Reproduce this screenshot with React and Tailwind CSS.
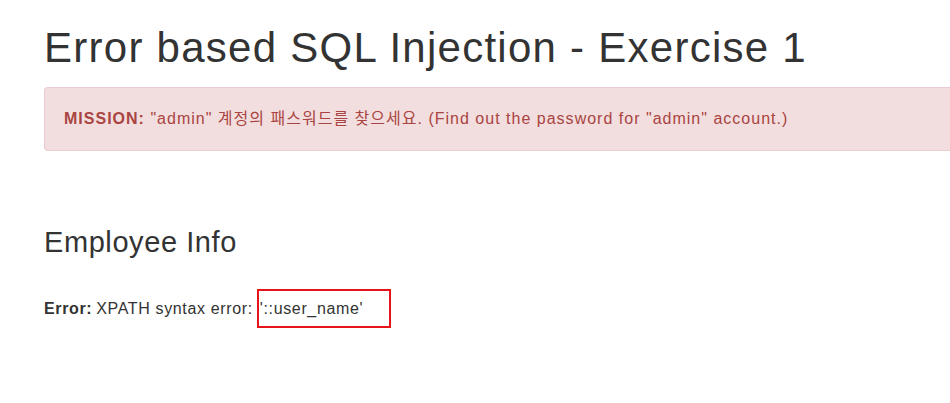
export default function App() {
  return (
    <div className="min-h-[403px] bg-white pl-[44px] font-['Liberation_Sans','Noto_Sans_CJK_KR',sans-serif] text-[#333]">
      <h1 className="pt-[24px] text-[42px] leading-[48px] tracking-[0.03em]">Error based SQL Injection - Exercise 1</h1>
      <div className="mt-[15px] h-[64px] rounded-l-[4px] border border-r-0 border-[#ebccd1] bg-[#f2dede] pl-[19px] text-[16px] leading-[62px] tracking-[0.063em] text-[#a94442]">
        <b>MISSION:</b> "admin" 계정의 패스워드를 찾으세요. (Find out the password for "admin" account.)
      </div>
      <h3 className="mt-[74px] text-[29px] leading-[34px] tracking-[0.02em]">Employee Info</h3>
      <p className="mt-[30px] flex items-center text-[16px] tracking-[0.04em]">
        <b>Error:</b>
        <span className="ml-[4px]">XPATH syntax error:</span>
        <span className="ml-[4px] flex h-[39px] w-[134px] items-center border-2 border-[#e8141c] pl-[1px]">'::user_name'</span>
      </p>
    </div>
  );
}
